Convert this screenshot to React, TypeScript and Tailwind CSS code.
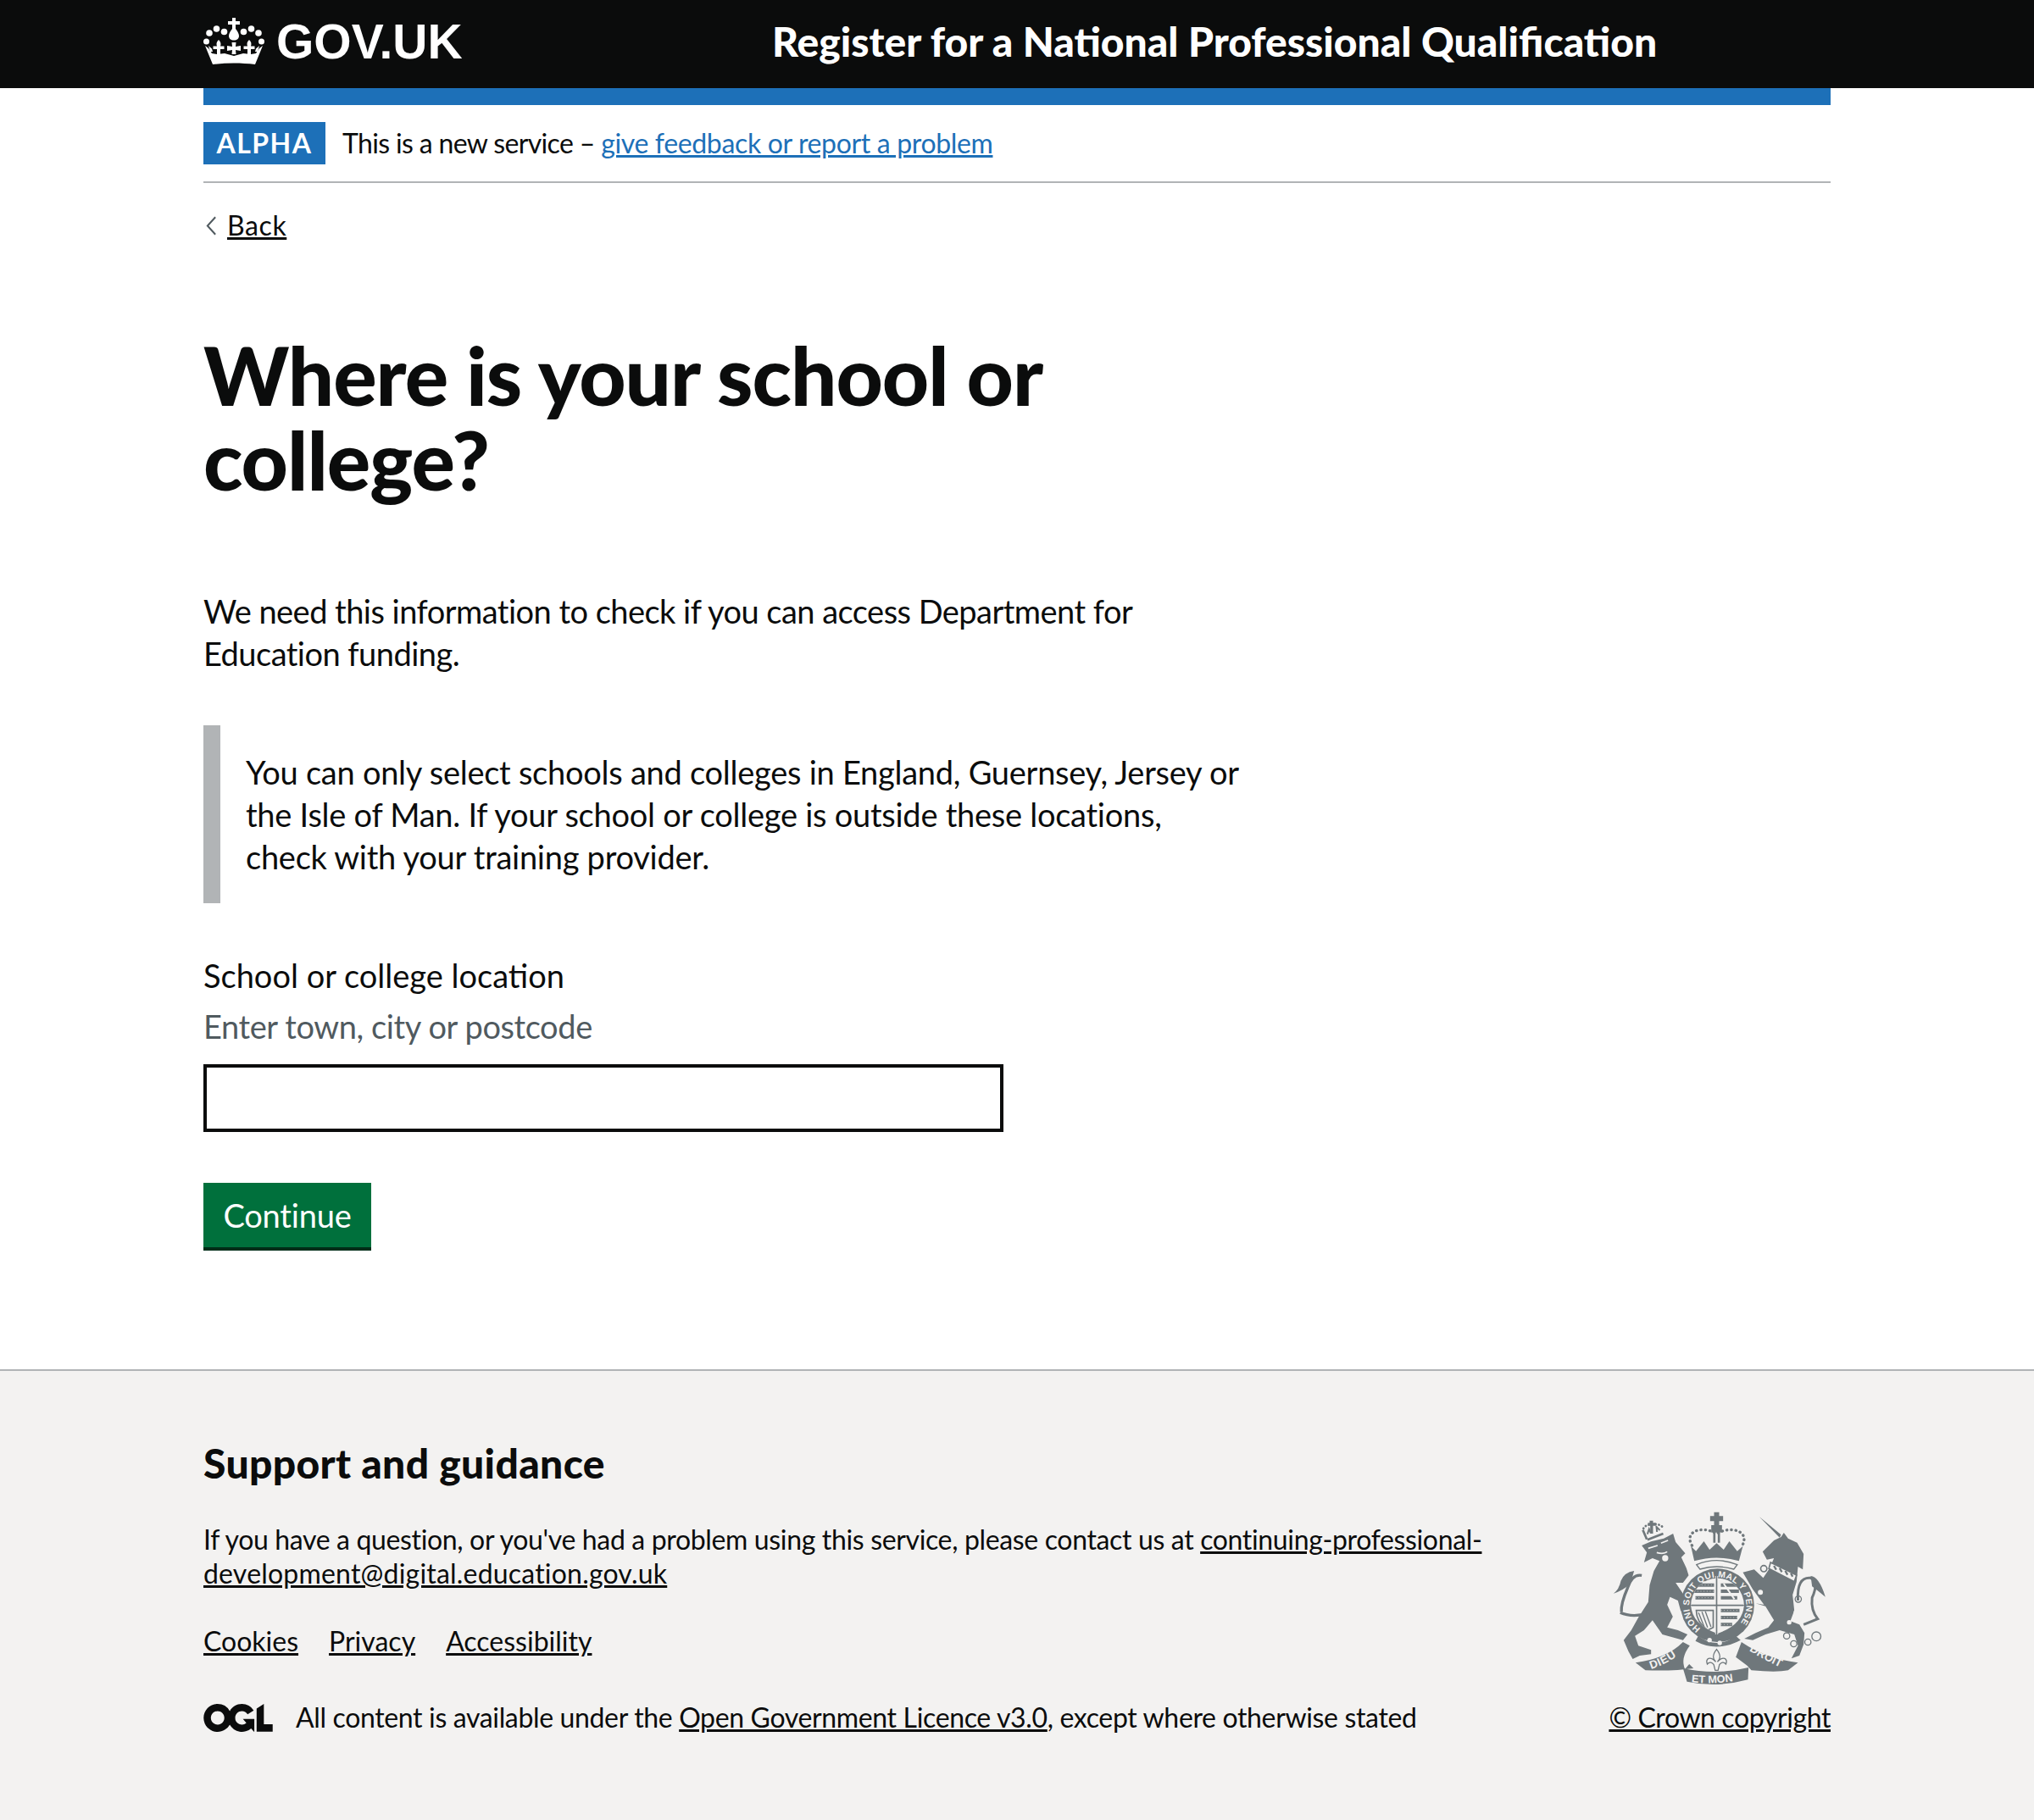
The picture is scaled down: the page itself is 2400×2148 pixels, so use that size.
const FONT = "font-['Lato',sans-serif]";

function Crown({ className }: { className?: string }) {
  return (
    <svg viewBox="0 0 72 56" className={className} fill="currentColor" aria-hidden="true">
      {/* dots */}
      <circle cx="7" cy="18" r="3.8" />
      <circle cx="15.500" cy="13" r="3.800" />
      <circle cx="24.500" cy="16.500" r="3.800" />
      <circle cx="47.500" cy="16.500" r="3.800" />
      <circle cx="56.500" cy="13" r="3.800" />
      <circle cx="65" cy="18" r="3.800" />
      <circle cx="3.500" cy="28" r="3.500" />
      <circle cx="68.500" cy="28" r="3.500" />
      {/* top cross and orb */}
      <path d="M34 0h4v4h5v4h-5v5c2.500 3 4 6 4 8.500 0 3-2.500 5-6 5s-6-2-6-5c0-2.500 1.500-5.500 4-8.500V8h-5V4h5z" />
      {/* fleurs and cross */}
      <path d="M18 26c2.500 2.500 3 4.500 2 7.500h4.500v3.500H20v6h-4v-6h-4.500v-3.500H16c-1-3-.5-5 2-7.500z" />
      <path d="M54 26c2.500 2.500 3 4.500 2 7.500h4.500v3.500H56v6h-4v-6h-4.500v-3.500H52c-1-3-.5-5 2-7.500z" />
      <path d="M33.500 29h5l-.5 5 6-1v6l-6-1 .5 5h-5l.5-5-6 1v-6l6 1z" />
      {/* base */}
      <path d="M2 33l4 3 4 6 6 1 9-1 11 3 11-3 9 1 6-1 4-6 4-3-9 22c-8-1-16.500-1.500-25-1.500S19 54 11 55z" />
      <path d="M6 33l4 3.500 1 3.500-3 0zM66 33l-4 3.500-1 3.500 3 0z" />
    </svg>
  );
}

function Crest({ className }: { className?: string }) {
  const dark = "#6f777b";
  const bg = "#f3f2f1";
  return (
    <svg viewBox="70 70 755 615" className={className} aria-hidden="true">
      <defs>
        <path id="garter" d="M380 484A101 101 0 1 1 502 484" />
        <path id="dieu" d="M205 628Q270 607 322 562" />
        <path id="etmon" d="M348 674Q437 684 528 664" />
        <path id="droit" d="M552 562Q610 598 680 630" />
        <clipPath id="shieldClip">
          <path d="M346 402A94 96 0 0 1 534 402Q530 470 440 502Q350 470 346 402Z" />
        </clipPath>
      </defs>
      {/* lion tail */}
      <path d="M190 432Q135 445 96 428M100 425Q98 395 122 340Q138 290 172 296" fill="none" stroke={dark} strokeWidth="10" />
      <path d="M72 360Q92 345 98 315Q110 285 145 280L132 325Q105 350 72 360Z" fill={dark} />
      {/* lion */}
      <path fill={dark} d="M172 190L205 176L250 165L283 148L292 178L326 218L312 232L330 270L338 296L318 322L292 322L318 360L345 415L335 430L310 422L300 385L272 372L262 400L282 442L262 480L300 490L334 505L318 525L280 515L245 505L210 455L180 490L148 510L160 545L205 560L205 575L165 580L140 592L125 565L108 525L135 490L160 445L195 390L200 330L215 280L235 245L210 235L180 250L190 215Z" />
      <path d="M195 200L228 190M240 182L265 172M225 215Q250 222 262 212" stroke={bg} strokeWidth="5" fill="none" />
      <circle cx="255" cy="235" r="11" fill={bg} />
      {/* lion crown */}
      <path d="M190 168L176 135" stroke={dark} strokeWidth="8" />
      <path d="M192 170L248 148" stroke={dark} strokeWidth="8" />
      <path d="M178 130C185 112 235 105 250 130" fill="none" stroke={dark} strokeWidth="8" strokeLinecap="round" strokeDasharray="1 11" />
      <path d="M200 102h12v8h8v10h-8v28h-10v-28h-8v-10h6z" fill={dark} />
      <path d="M192 150l6-18 6 14M226 142l-2-18 12 12" stroke={dark} strokeWidth="6" fill="none" />
      {/* royal crown */}
      <path d="M350 190C320 140 385 118 437 148C490 118 555 140 528 190" fill="none" stroke={dark} strokeWidth="10" strokeLinecap="round" strokeDasharray="1 15" />
      <path d="M428 72h18v14h14v18h-14v14h-18v-14h-14v-18h14z" fill={dark} />
      <path d="M418 118h38v26h-38z" fill={dark} />
      <path d="M425 145h8v35h-8zM441 145h8v35h-8z" fill={dark} />
      <path d="M346 192L364 210L392 175L412 205L437 182L462 205L482 175L510 210L530 192L516 245Q437 222 358 245Z" fill={dark} />
      <path d="M366 258Q437 228 510 258L498 274Q437 256 378 274Z" fill={bg} stroke={dark} strokeWidth="4" />
      {/* garter */}
      <circle cx="440" cy="402" r="130" fill={dark} />
      <text fill={bg} fontFamily="Liberation Sans, sans-serif" fontWeight="700" fontSize="31">
        <textPath href="#garter" textLength="475">HONI SOIT QUI MAL Y PENSE</textPath>
      </text>
      {/* shield */}
      <path d="M346 402A94 96 0 0 1 534 402Q530 470 440 502Q350 470 346 402Z" fill={bg} />
      <g clipPath="url(#shieldClip)">
        <path d="M362 330h66M358 352h70M362 375h66M452 330h58M452 352h64M452 375h58M452 420h66M452 445h58M452 470h40" stroke={dark} strokeWidth="12" />
        <path d="M362 330h66M358 352h70M362 375h66M452 420h66M452 445h58M452 470h40" stroke={bg} strokeWidth="2" strokeDasharray="3 8" />
        <path d="M365 420q30 0 60 0v60l-20 10q-40-30-40-70z" fill="none" stroke={dark} strokeWidth="5" />
        <path d="M385 425l20 55M397 423l20 55M373 428l20 50" stroke={dark} strokeWidth="4" />
        <path d="M462 325L500 380" stroke={bg} strokeWidth="6" />
      </g>
      <path d="M437 298V505M346 402H534" stroke={bg} strokeWidth="10" />
      <path d="M437 298V505M346 402H534" stroke={dark} strokeWidth="5" />
      {/* buckle */}
      <path d="M372 510Q437 560 505 510L522 525Q437 570 362 528Z" fill={dark} />
      <circle cx="412" cy="525" r="8" fill={bg} />
      <circle cx="448" cy="535" r="8" fill={bg} />
      {/* unicorn */}
      <path d="M588 88L665 152L660 162Z" fill={dark} />
      <path fill={dark} d="M600 212L640 172L665 160L675 145L690 165L722 180L745 220L742 275L725 265L720 318L706 365L712 420L698 458L730 470L748 500L745 540L730 580L702 590L725 545L712 505L660 490L610 505L565 525L535 520L575 500L620 480L640 455L610 405L575 395L605 400L565 345L530 285L570 275L602 305L625 270L640 235L615 240Z" />
      <path d="M628 250L720 295L712 318L622 272Z" fill={bg} stroke={dark} strokeWidth="5" />
      <path d="M640 262l8 14M660 270l8 14M680 280l8 14M700 288l6 12" stroke={dark} strokeWidth="7" />
      <circle cx="604" cy="272" r="11" fill={bg} stroke={dark} strokeWidth="5" />
      <circle cx="592" cy="356" r="11" fill={bg} stroke={dark} strokeWidth="4" />
      <circle cx="726" cy="380" r="11" fill={bg} stroke={dark} strokeWidth="4" />
      <circle cx="718" cy="425" r="8" fill={bg} />
      <circle cx="694" cy="462" r="8" fill={bg} />
      <circle cx="685" cy="510" r="11" fill={bg} stroke={dark} strokeWidth="4" />
      <circle cx="710" cy="538" r="11" fill={bg} stroke={dark} strokeWidth="4" />
      <circle cx="760" cy="532" r="11" fill={bg} stroke={dark} strokeWidth="4" />
      <circle cx="790" cy="512" r="16" fill={bg} stroke={dark} strokeWidth="4" />
      {/* unicorn tail */}
      <path d="M725 385Q720 300 770 305Q800 320 775 375Q770 420 795 450L745 470" fill="none" stroke={dark} strokeWidth="9" />
      <path d="M770 298Q800 300 822 372Q795 350 775 335Z" fill={dark} />
      {/* scrolls */}
      <path fill={dark} d="M150 605Q260 590 318 532L342 545Q308 590 325 628L340 610L355 625Q290 635 185 632Z" />
      <path fill={dark} d="M725 605Q610 590 525 532L505 585L545 615L560 632Q650 640 690 632Z" />
      <path fill={dark} d="M318 625Q437 650 550 622L548 665Q437 695 332 672Z" />
      <text fill={bg} fontFamily="Liberation Sans, sans-serif" fontWeight="700" fontSize="40" letterSpacing="2">
        <textPath href="#dieu">DIEU</textPath>
      </text>
      <text fill={bg} fontFamily="Liberation Sans, sans-serif" fontWeight="700" fontSize="38">
        <textPath href="#etmon">ET MON</textPath>
      </text>
      <text fill={bg} fontFamily="Liberation Sans, sans-serif" fontWeight="700" fontSize="40">
        <textPath href="#droit">DROIT</textPath>
      </text>
      {/* fleur */}
      <path d="M437 558C455 580 448 595 440 602C460 580 478 590 470 610C462 600 452 605 447 612L442 632H432L427 612C422 605 412 600 404 610C396 590 414 580 434 602C426 595 419 580 437 558Z" fill={bg} stroke={dark} strokeWidth="4" />
    </svg>
  );
}

function OglLogo({ className }: { className?: string }) {
  return (
    <svg viewBox="0 0 483.2 195.7" className={className} fill="currentColor" aria-hidden="true">
      <path d="M421.5 142.8V.1l-50.7 32.3v161.1h112.4v-50.7zm-122.3-9.6A47.12 47.12 0 0 1 221 97.8c0-26 21.1-47.1 47.1-47.1 16.7 0 31.4 8.7 39.7 21.8l42.7-27.2A97.63 97.63 0 0 0 268.1 0c-36.5 0-68.3 20.1-85.1 49.7A98 98 0 0 0 97.8 0C43.9 0 0 43.9 0 97.8s43.9 97.8 97.8 97.8c36.5 0 68.3-20.1 85.1-49.7a97.76 97.76 0 0 0 149.6 25.4l19.4 22.2h3v-87.8h-80l24.3 27.5zM97.8 145c-26 0-47.1-21.1-47.1-47.1s21.1-47.1 47.1-47.1 47.2 21 47.2 47S123.8 145 97.8 145" />
    </svg>
  );
}

export default function App() {
  return (
    <div className={`${FONT} min-h-[2148px] flex flex-col bg-white text-[#0b0c0c]`}>
      {/* Header */}
      <header className="bg-[#0b0c0c] text-white h-[104px] shrink-0">
        <div className="w-[1920px] mx-auto h-full flex items-center pb-[6px]">
          <div className="w-[671px] flex items-center gap-[14px]">
            <Crown className="w-[72px] h-[56px]" />
            <span className="font-['Liberation_Sans',sans-serif] font-bold text-[57px] leading-none">GOV.UK</span>
          </div>
          <span className="font-black text-[48px] leading-none">Register for a National Professional Qualification</span>
        </div>
      </header>

      <main className="w-[1920px] mx-auto flex-1">
        <div className="h-5 bg-[#1d70b8]" />

        {/* Phase banner */}
        <div className="flex items-center py-5 border-b-2 border-[#b1b4b6] h-[92px]">
          <strong className="bg-[#1d70b8] text-white text-[32px] leading-[50px] h-[50px] w-[144px] text-center tracking-[1.5px] font-bold">ALPHA</strong>
          <span className="ml-5 text-[32px] leading-10 tracking-[-0.65px]">
            This is a new service –{" "}
            <a href="#" className="text-[#1d70b8] underline tracking-[-0.35px]">give feedback or report a problem</a>
          </span>
        </div>

        {/* Back link */}
        <a href="#" className="mt-[30px] inline-flex items-center text-[32px] leading-10 gap-[12px] pl-[3px]">
          <svg viewBox="0 0 14 24" className="w-[13px] h-[23px] text-[#505a5f]" fill="none" stroke="currentColor" strokeWidth="2.2">
            <path d="M12 1L2 12l10 11" />
          </svg>
          <span className="underline tracking-[0.6px]">Back</span>
        </a>

        <h1 className="mt-[106px] w-[1240px] text-[96px] leading-[100px] font-black tracking-[-1px]">Where is your school or college?</h1>

        <p className="mt-[104px] w-[1240px] text-[38px] leading-[50px] tracking-[-0.53px]">
          We need this information to check if you can access Department for Education funding.
        </p>

        {/* Inset */}
        <div className="mt-[60px] w-[1256px] border-l-[20px] border-[#b1b4b6] p-[30px] text-[38px] leading-[50px] h-[210px] tracking-[-0.26px]">
          You can only select schools and colleges in England, Guernsey, Jersey or the Isle of Man. If your school or college is outside these locations, check with your training provider.
        </div>

        {/* Form */}
        <label className="block mt-[60px] text-[38px] leading-[50px]">School or college location</label>
        <div className="mt-[10px] text-[38px] leading-[50px] text-[#505a5f] tracking-[-0.4px]">Enter town, city or postcode</div>
        <input className="block mt-5 w-[944px] h-[80px] border-4 border-[#0b0c0c] bg-white" />
        <button className="block mt-[60px] bg-[#00703c] text-white text-[38px] leading-[50px] w-[198px] h-[76px] shadow-[0_4px_0_#002d18] tracking-[-0.2px]">
          Continue
        </button>
      </main>

      {/* Footer */}
      <footer className="bg-[#f3f2f1] border-t-2 border-[#b1b4b6] h-[532px] shrink-0">
        <div className="w-[1920px] mx-auto pt-[79px] flex items-end justify-between">
          <div className="w-[1530px] text-[32px] leading-10 tracking-[-0.35px]">
            <h2 className="text-[48px] leading-[60px] font-black tracking-[0.35px]">Support and guidance</h2>
            <p className="mt-[40px]">
              If you have a question, or you've had a problem using this service, please contact us at{" "}
              <a href="#" className="underline">continuing-professional-<span className="tracking-[0.2px]">development@digital.education.gov.uk</span></a>
            </p>
            <ul className="mt-10 flex gap-[36px] tracking-normal">
              <li><a href="#" className="underline">Cookies</a></li>
              <li><a href="#" className="underline">Privacy</a></li>
              <li><a href="#" className="underline">Accessibility</a></li>
            </ul>
            <div className="mt-[50px] flex items-center gap-[27px]">
              <OglLogo className="w-[82px] h-[33px]" />
              <span>
                All content is available under the{" "}
                <a href="#" className="underline">Open Government Licence v3.0</a>, except where otherwise stated
              </span>
            </div>
          </div>
          <div className="flex flex-col items-end">
            <Crest className="w-[252px] h-[205px] mr-[5px]" />
            <a href="#" className="mt-[18px] text-[32px] leading-10 underline tracking-[-0.4px]">© Crown copyright</a>
          </div>
        </div>
      </footer>
    </div>
  );
}
